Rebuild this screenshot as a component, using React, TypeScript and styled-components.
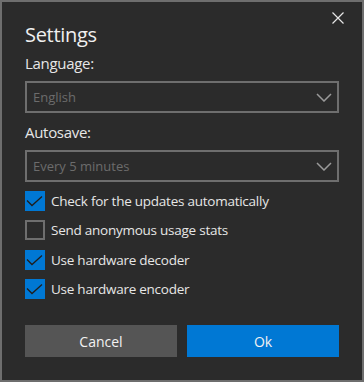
import styled, { createGlobalStyle } from 'styled-components';

const GlobalStyle = createGlobalStyle`
  html, body {
    margin: 0;
    padding: 0;
    background: #2b2b2b;
  }
  * {
    box-sizing: border-box;
  }
`;

const Dialog = styled.div`
  position: relative;
  width: 364px;
  height: 382px;
  border: 2px solid #6e6e6e;
  background: #2b2b2b;
  padding: 0 23px;
  display: flex;
  flex-direction: column;
  font-family: "Open Sans", "Noto Sans", sans-serif;
  color: #e6e6e6;
`;

const CloseButton = styled.button`
  position: absolute;
  top: 10px;
  right: 18px;
  width: 12px;
  height: 12px;
  padding: 0;
  border: none;
  background: none;
  display: flex;
  cursor: pointer;
`;

const Title = styled.h1`
  margin: 19px 0 0;
  font-size: 20px;
  line-height: 27px;
  font-weight: 400;
  letter-spacing: -0.3px;
  color: #f0f0f0;
`;

const FieldLabel = styled.div<{ top: number }>`
  margin-top: ${props => props.top}px;
  font-size: 15px;
  line-height: 20px;
  letter-spacing: -0.3px;
`;

const Select = styled.div`
  margin-top: 8px;
  height: 32px;
  border: 2px solid #6e6e6e;
  display: flex;
  align-items: center;
  justify-content: space-between;
  padding: 0 5px 0 6px;
  font-size: 13px;
  color: #6c6c6c;
`;

const Checks = styled.div`
  margin-top: 9px;
  display: flex;
  flex-direction: column;
  gap: 9.4px;
`;

const CheckRow = styled.label`
  display: flex;
  align-items: center;
  gap: 6px;
  height: 20px;
  font-size: 13.5px;
  letter-spacing: -0.25px;
  cursor: pointer;
`;

const Box = styled.span<{ checked: boolean }>`
  width: 20px;
  height: 20px;
  flex: none;
  display: flex;
  align-items: center;
  justify-content: center;
  background: ${props => (props.checked ? '#0078d4' : 'transparent')};
  border: ${props => (props.checked ? 'none' : '2px solid #6e6e6e')};
`;

const Buttons = styled.div`
  margin-top: auto;
  margin-bottom: 23px;
  display: grid;
  grid-template-columns: 1fr 1fr;
  gap: 10px;
`;

const Button = styled.button<{ primary?: boolean }>`
  height: 32px;
  border: none;
  background: ${props => (props.primary ? '#0078d4' : '#555555')};
  color: #f2f2f2;
  font-family: inherit;
  font-size: 14px;
  cursor: pointer;
`;

function Chevron() {
  return (
    <svg width="16" height="9" viewBox="0 0 16 9">
      <path d="M1 1 L8 8 L15 1" fill="none" stroke="#9a9a9a" strokeWidth="1.5" />
    </svg>
  );
}

function Check() {
  return (
    <svg width="20" height="20" viewBox="0 0 20 20">
      <path d="M2 9.5 L7 14.5 L17 5.5" fill="none" stroke="#1e1e1e" strokeWidth="1.3" />
    </svg>
  );
}

type checkProps = {
  checked: boolean;
  label: string;
};

function CheckItem({ checked, label }: checkProps) {
  return (
    <CheckRow>
      <Box checked={checked}>{checked && <Check />}</Box>
      {label}
    </CheckRow>
  );
}

const options = [
  { label: 'Check for the updates automatically', checked: true },
  { label: 'Send anonymous usage stats', checked: false },
  { label: 'Use hardware decoder', checked: true },
  { label: 'Use hardware encoder', checked: true },
];

export default function App() {
  return (
    <>
      <GlobalStyle />
      <Dialog>
        <CloseButton aria-label="Close">
          <svg width="12" height="12" viewBox="0 0 12 12">
            <path d="M0.5 0.5 L11.5 11.5 M11.5 0.5 L0.5 11.5" stroke="#e6e6e6" strokeWidth="1.2" />
          </svg>
        </CloseButton>
        <Title>Settings</Title>
        <FieldLabel top={5}>Language:</FieldLabel>
        <Select>
          English
          <Chevron />
        </Select>
        <FieldLabel top={9}>Autosave:</FieldLabel>
        <Select>
          Every 5 minutes
          <Chevron />
        </Select>
        <Checks>
          {options.map(o => (
            <CheckItem key={o.label} label={o.label} checked={o.checked} />
          ))}
        </Checks>
        <Buttons>
          <Button>Cancel</Button>
          <Button primary>Ok</Button>
        </Buttons>
      </Dialog>
    </>
  );
}
